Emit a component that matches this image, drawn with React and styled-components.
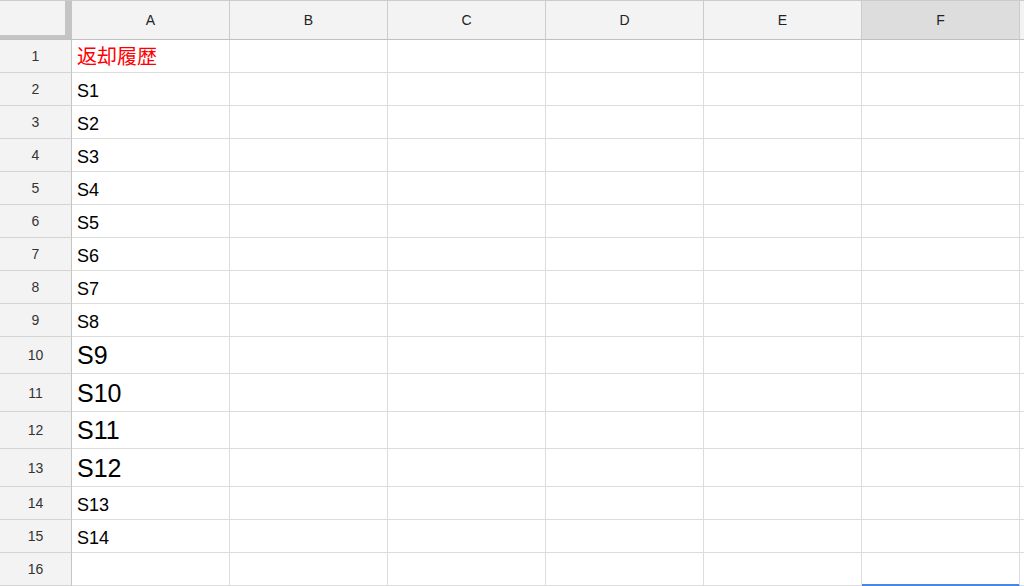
import React from 'react';
import styled, { createGlobalStyle } from 'styled-components';

const GlobalStyle = createGlobalStyle`
  html, body {
    margin: 0;
    padding: 0;
    background: #ffffff;
  }

  body {
    font-family: 'Liberation Sans', Arial, 'Noto Sans CJK JP', sans-serif;
  }
`;

// G only peeks in at the right edge, its letter is off screen
const COLUMNS = ['A', 'B', 'C', 'D', 'E', 'F', 'G'];
const VISIBLE_LETTERS = ['A', 'B', 'C', 'D', 'E', 'F'];

const ROWS = [
  { value: '返却履歴', tone: 'red', height: 33 },
  { value: 'S1', height: 33 },
  { value: 'S2', height: 33 },
  { value: 'S3', height: 33 },
  { value: 'S4', height: 33 },
  { value: 'S5', height: 33 },
  { value: 'S6', height: 33 },
  { value: 'S7', height: 33 },
  { value: 'S8', height: 33 },
  { value: 'S9', size: 'large', height: 37 },
  { value: 'S10', size: 'large', height: 38 },
  { value: 'S11', size: 'large', height: 37 },
  { value: 'S12', size: 'large', height: 38 },
  { value: 'S13', height: 33 },
  { value: 'S14', height: 33 },
  { value: '', height: 33 },
];

const Sheet = styled.div`
  display: grid;
  grid-template-columns: 72px repeat(7, 158px);
  width: 1024px;
  height: 586px;
  overflow: hidden;
  border-top: 1px solid #cbcbcb;
  box-sizing: border-box;
`;

const Corner = styled.div`
  background: #f3f3f3;
  border-bottom: 1px solid #c0c0c0;
  box-shadow: inset -7px -4px 0 0 #c4c4c4;
`;

const ColumnHeader = styled.div`
  display: flex;
  align-items: center;
  justify-content: center;
  height: 39px;
  box-sizing: border-box;
  background: ${({ $selected }) => ($selected ? '#dddddd' : '#f3f3f3')};
  border-right: 1px solid #cccccc;
  border-bottom: 1px solid #c0c0c0;
  color: #222222;
  font-size: 14px;
`;

const RowHeader = styled.div`
  display: flex;
  align-items: center;
  justify-content: center;
  box-sizing: border-box;
  background: #f3f3f3;
  border-right: 1px solid #c4c4c4;
  border-bottom: 1px solid #d4d4d4;
  color: #333333;
  font-size: 14px;
`;

const Cell = styled.div`
  display: flex;
  align-items: flex-end;
  box-sizing: border-box;
  padding: 0 4px 3px 5px;
  white-space: nowrap;
  border-right: 1px solid #dcdcdc;
  border-bottom: 1px solid ${({ $active }) => ($active ? '#4a86e8' : '#dcdcdc')};
  box-shadow: ${({ $active }) => ($active ? 'inset 0 -1px 0 0 #4a86e8' : 'none')};
  color: ${({ $tone }) => ($tone === 'red' ? '#ff0000' : '#000000')};
  font-size: ${({ $size, $tone }) => {
    if ($size === 'large') return '25px';
    if ($tone === 'red') return '20px';
    return '18px';
  }};
  line-height: 1.15;
`;

const App = () => (
  <>
    <GlobalStyle />
    <Sheet
      style={{
        gridTemplateRows: `39px ${ROWS.map((row) => `${row.height}px`).join(' ')}`,
      }}
    >
      <Corner />
      {COLUMNS.map((letter) => (
        <ColumnHeader key={letter} $selected={letter === 'F'}>
          {VISIBLE_LETTERS.includes(letter) ? letter : ''}
        </ColumnHeader>
      ))}

      {ROWS.map((row, index) => (
        <React.Fragment key={index}>
          <RowHeader>{index + 1}</RowHeader>
          {COLUMNS.map((letter) => (
            <Cell
              key={letter}
              $tone={letter === 'A' ? row.tone : undefined}
              $size={letter === 'A' ? row.size : undefined}
              $active={letter === 'F' && index === ROWS.length - 1}
            >
              {letter === 'A' ? row.value : ''}
            </Cell>
          ))}
        </React.Fragment>
      ))}
    </Sheet>
  </>
);

export default App;
